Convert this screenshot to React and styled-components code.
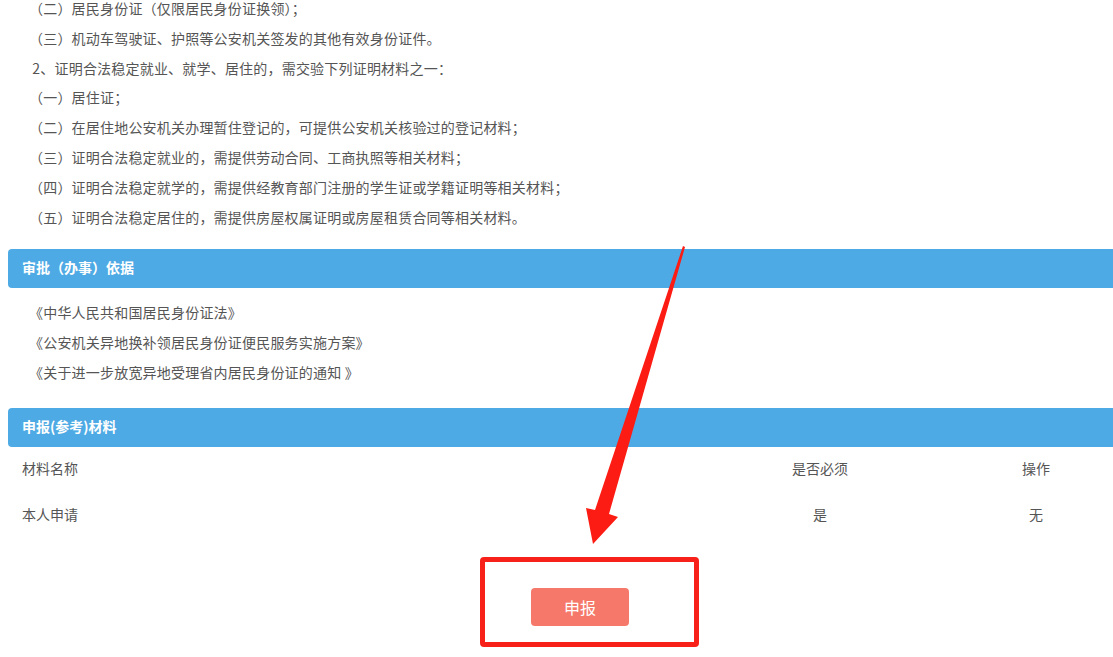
import styled, { createGlobalStyle } from 'styled-components';

const GlobalStyle = createGlobalStyle`
  html, body {
    margin: 0;
    padding: 0;
    overflow: hidden;
    background: #fff;
  }
  body {
    font-family: "Microsoft YaHei", "Noto Sans CJK SC", "Noto Sans", sans-serif;
    font-size: 14px;
    color: #555;
  }
`;

const intro = [
  '（二）居民身份证（仅限居民身份证换领）；',
  '（三）机动车驾驶证、护照等公安机关签发的其他有效身份证件。',
  '\u00a02、证明合法稳定就业、就学、居住的，需交验下列证明材料之一：',
  '（一）居住证；',
  '（二）在居住地公安机关办理暂住登记的，可提供公安机关核验过的登记材料；',
  '（三）证明合法稳定就业的，需提供劳动合同、工商执照等相关材料；',
  '（四）证明合法稳定就学的，需提供经教育部门注册的学生证或学籍证明等相关材料；',
  '（五）证明合法稳定居住的，需提供房屋权属证明或房屋租赁合同等相关材料。',
];

const basis = [
  '《中华人民共和国居民身份证法》',
  '《公安机关异地换补领居民身份证便民服务实施方案》',
  '《关于进一步放宽异地受理省内居民身份证的通知 》',
];

const rows = [
  { name: '材料名称', must: '是否必须', op: '操作' },
  { name: '本人申请', must: '是', op: '无' },
];

const App = () => {
  return (
    <S.Page>
      <GlobalStyle />
      <S.Lines $top={-6} $lh={29.8}>
        {intro.map((t, i) => <S.Line key={i}>{t}</S.Line>)}
      </S.Lines>

      <S.Bar $gap={16.6}>审批（办事）依据</S.Bar>
      <S.Lines $top={9} $lh={30}>
        {basis.map((t, i) => <S.Line key={i}>{t}</S.Line>)}
      </S.Lines>

      <S.Bar $gap={21}>申报(参考)材料</S.Bar>
      <S.Table>
        {rows.map((r, i) => (
          <S.Row key={i}>
            <S.Cell>{r.name}</S.Cell>
            <S.Cell $center>{r.must}</S.Cell>
            <S.Cell $center>{r.op}</S.Cell>
          </S.Row>
        ))}
      </S.Table>

      <S.Footer>
        <S.ButtonWrap>
          <S.Mark />
          <S.Submit>申报</S.Submit>
        </S.ButtonWrap>
      </S.Footer>

      <S.Arrow viewBox="0 0 1113 657" width="1113" height="657">
        <polygon
          fill="#fc1c13"
          points="685,253 609,520 618,523 593,550 586,514 595,516 683,252"
        />
      </S.Arrow>
    </S.Page>
  );
};

export default App;

const S = {
  Page: styled.div`
    position: relative;
    width: 1144px;
    margin-left: 8px;
    height: 657px;
  `,
  Lines: styled.div`
    margin-top: ${p => p.$top}px;
    padding-left: 21px;
    font-size: 14px;
    letter-spacing: 0.2px;
    line-height: ${p => p.$lh}px;
  `,
  Line: styled.p`
    margin: 0;
    white-space: nowrap;
  `,
  Bar: styled.div`
    margin-top: ${p => p.$gap}px;
    height: 39px;
    display: flex;
    align-items: center;
    padding-left: 14px;
    padding-bottom: 2px;
    box-sizing: border-box;
    border-radius: 4px;
    background: #4eaae4;
    color: #fff;
    font-weight: bold;
    font-size: 14px;
  `,
  Table: styled.div`
    display: flex;
    flex-direction: column;
  `,
  Row: styled.div`
    display: grid;
    grid-template-columns: 712px 200px 232px;
    height: 46px;
    align-items: center;
  `,
  Cell: styled.div`
    padding-left: ${p => (p.$center ? 0 : 14)}px;
    padding-bottom: 4px;
    text-align: ${p => (p.$center ? 'center' : 'left')};
  `,
  Footer: styled.div`
    display: flex;
    justify-content: center;
    padding-top: 49px;
  `,
  ButtonWrap: styled.div`
    position: relative;
  `,
  Mark: styled.div`
    position: absolute;
    left: -51px;
    top: -31px;
    right: -70px;
    bottom: -21px;
    border: 5px solid #f8211a;
    border-radius: 4px;
    box-sizing: border-box;
  `,
  Submit: styled.button`
    display: block;
    width: 98px;
    height: 38px;
    border: 0;
    border-radius: 4px;
    background: #f5786a;
    color: #fff;
    font-family: inherit;
    font-size: 16px;
    padding: 0;
  `,
  Arrow: styled.svg`
    position: absolute;
    left: -8px;
    top: 0;
    pointer-events: none;
  `,
};
